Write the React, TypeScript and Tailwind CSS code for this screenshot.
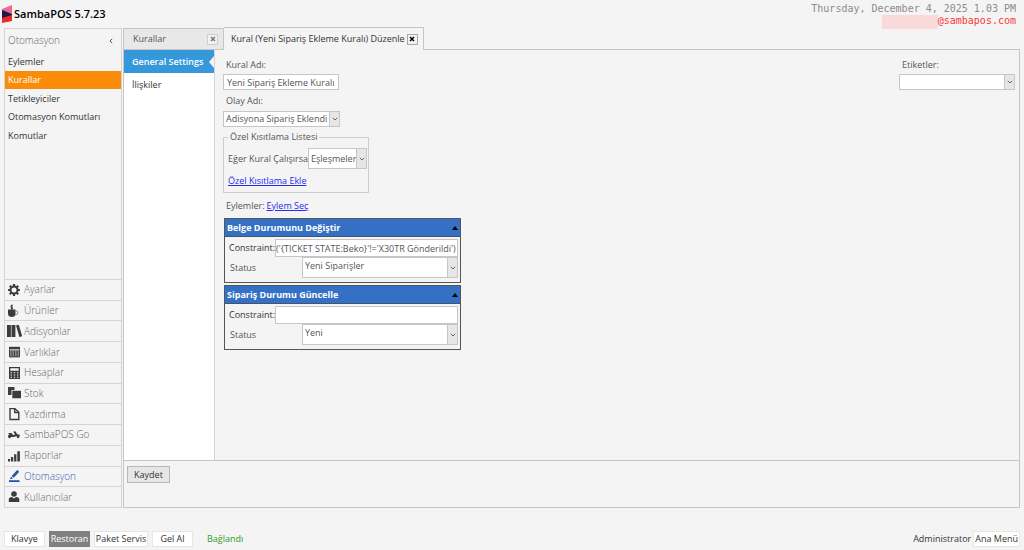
import { useState } from "react";
import type { ReactNode } from "react";

const menuItems = ["Eylemler", "Kurallar", "Tetikleyiciler", "Otomasyon Komutları", "Komutlar"];

const modules: { label: string; icon: ReactNode }[] = [
  {
    label: "Ayarlar",
    icon: (
      <>
        <circle cx="6" cy="6" r="3.5" fill="none" stroke="currentColor" strokeWidth="2" />
        <path
          d="M6 .1v2M6 9.9v2M.1 6h2M9.900 6h2M1.800 1.800l1.500 1.500M8.700 8.700l1.500 1.500M10.200 1.800L8.700 3.300M3.300 8.700l-1.500 1.500"
          stroke="currentColor"
          strokeWidth="2.200"
        />
      </>
    ),
  },
  {
    label: "Ürünler",
    icon: (
      <>
        <path d="M0 4.500h7.500v4Q7.500 12 3.800 12T0 8.500z" fill="currentColor" />
        <path d="M7.500 6h.6a1.500 1.500 0 010 3.600H7" fill="none" stroke="#888" strokeWidth="1" />
        <path d="M4.500 0Q2.500 1.500 3.800 2.500T3 4.600" fill="none" stroke="currentColor" strokeWidth="1.600" />
      </>
    ),
  },
  {
    label: "Adisyonlar",
    icon: <path d="M-1 0h3.900v12H-1zM3.500 0h3.900v12H3.500zM8 .6l2.800-.8L14.200 11.200l-2.800.8z" fill="currentColor" />,
  },
  {
    label: "Varlıklar",
    icon: (
      <>
        <path d="M1 .8h11v2.200H1z" fill="currentColor" />
        <path d="M1 3.400h11v7.800H1z" fill="#8a8a8a" />
        <path d="M1.500 3.500v7.300h10V3.500M4 5v5M6.500 5v5M9 5v5" fill="none" stroke="currentColor" strokeWidth="1" />
      </>
    ),
  },
  {
    label: "Hesaplar",
    icon: (
      <path
        fillRule="evenodd"
        fill="currentColor"
        d="M1 0h11v12H1zM2.300 1.300v2.400h8.400V1.300zM2.600 5.200v1h1.400v-1zM5.800 5.200v1h1.400v-1zM9 5.200v1h1.400v-1zM2.600 7.500v1h1.400v-1zM5.800 7.500v1h1.400v-1zM9 7.500v1h1.400v-1zM2.600 9.800v1h1.400v-1zM5.800 9.800v1h1.400v-1zM9 9.800v1h1.400v-1z"
      />
    ),
  },
  { label: "Stok", icon: <path d="M0 0h6.500v3H3.500v5H0zM4.300 3.800H13v7.400H4.300z" fill="currentColor" /> },
  {
    label: "Yazdırma",
    icon: <path d="M2 .6h5L10.800 4.200v7.300H2zM6.700 1v3.500H10.500" fill="none" stroke="currentColor" strokeWidth="1.400" />,
  },
  {
    label: "SambaPOS Go",
    icon: (
      <>
        <path d="M0 4h3.600l1.600 2.200L7 5.200 5.400 3 6 2.200 7.600 2.400 9.200 5.200l2.600.6v1.400L8.500 7 6 8H0V6.500l1.500-1z" fill="currentColor" />
        <circle cx="1.600" cy="8" r="1.300" fill="currentColor" />
        <circle cx="10" cy="7.800" r="1.400" fill="currentColor" />
      </>
    ),
  },
  {
    label: "Raporlar",
    icon: <path d="M0 9h2v2.500H0zM2.900 7h2.300v4.500H2.900zM6.100 4.200h2.300v7.300H6.100zM9.300 1.200h2.600v10.300H9.300z" fill="currentColor" />,
  },
  {
    label: "Otomasyon",
    icon: <path d="M1 10.200h10.500V12H1zM9.200 0l2 1.700-5.500 6L3.700 6zM3 6.700l2 1.700L1.800 9.200z" fill="currentColor" />,
  },
  {
    label: "Kullanıcılar",
    icon: (
      <>
        <circle cx="6" cy="3" r="2.800" fill="currentColor" />
        <path d="M.8 11V8.500Q.8 6 4 6l2 1.600L8 6q3.300 0 3.300 2.500V11z" fill="currentColor" />
      </>
    ),
  },
];

function Dropdown({ id, options, className }: { id: string; options: string[]; className: string }) {
  return (
    <div className={`relative border border-[#c6c6c6] bg-white ${className}`}>
      <select id={id} className="block h-full w-full appearance-none pr-[10px] pl-[2px] outline-none">
        {options.map((option) => (
          <option key={option}>{option}</option>
        ))}
      </select>
      <span className="pointer-events-none absolute inset-y-0 right-0 flex w-[10px] items-center justify-center border-l border-[#c6c6c6] bg-[#e6e6e6]">
        <svg viewBox="0 0 6 4" className="h-1 w-[6px]" fill="none" stroke="#666">
          <path d="M.8.8L3 3 5.200.8" />
        </svg>
      </span>
    </div>
  );
}

function CloseButton({ label, active = false }: { label: string; active?: boolean }) {
  return (
    <button
      aria-label={label}
      className={`flex h-[11px] w-[11px] items-center justify-center border bg-[#f2f2f2] ${
        active ? "border-[#a8a8a8] text-black" : "border-[#cfcfcf] text-[#777]"
      }`}
    >
      <svg viewBox="0 0 6 6" className="h-[6px] w-[6px]" stroke="currentColor" strokeWidth="1.500">
        <path d="M1 1l4 4M5 1L1 5" />
      </svg>
    </button>
  );
}

function ActionPanel({ id, title, constraint, status }: { id: string; title: string; constraint: string; status: string }) {
  const [open, setOpen] = useState(true);

  return (
    <section className="w-[237px] border border-[#555]">
      <button
        type="button"
        aria-expanded={open}
        onClick={() => setOpen(!open)}
        className="flex h-[18px] w-full items-center justify-between border-b border-[#44546c] bg-[#3470c4] px-[2px] font-bold text-white"
      >
        {title}
        <svg viewBox="0 0 6 4" className="h-1 w-[6px]">
          <path d="M0 4l3-4 3 4z" />
        </svg>
      </button>
      {open && (
        <div className="px-[2px] pt-[2px] pb-1">
          <div className="flex items-center">
            <label htmlFor={`${id}-constraint`} className="w-12 pl-[2px] text-[#333]">
              Constraint:
            </label>
            <input
              id={`${id}-constraint`}
              defaultValue={constraint}
              className="h-[18px] min-w-0 flex-1 border border-[#c6c6c6] bg-white outline-none"
            />
          </div>
          <div className="flex items-center">
            <label htmlFor={`${id}-status`} className="w-[75px] pl-[3px]">
              Status
            </label>
            <Dropdown id={`${id}-status`} options={[status]} className="h-[21px] flex-1 pb-[3px]" />
          </div>
        </div>
      )}
    </section>
  );
}

function Sidebar() {
  return (
    <aside className="flex w-[118px] flex-col border border-[#d4d4d4]">
      <div className="flex h-[23px] items-center justify-between px-[3px] text-[10px] font-light text-[#666]">
        Otomasyon
        <button aria-label="Daralt" className="mr-[5px]">
          <svg viewBox="0 0 4 6" className="h-[6px] w-1" fill="none" stroke="#555">
            <path d="M3.200.8L1 3l2.200 2.200" />
          </svg>
        </button>
      </div>
      <nav className="grid h-[93px] grid-rows-5">
        {menuItems.map((item) => (
          <a
            key={item}
            href="#"
            className={`flex items-center px-[3px] ${item === "Kurallar" ? "bg-[#fa8c0a] text-white" : "text-[#333]"}`}
          >
            {item}
          </a>
        ))}
      </nav>
      <nav className="mt-auto grid h-[228px] grid-rows-11 text-[10px] font-light">
        {modules.map(({ label, icon }) => (
          <a
            key={label}
            href="#"
            className={`flex items-center gap-1 border-t border-[#d4d4d4] pl-[3px] ${
              label === "Otomasyon" ? "text-[#3f62a8]" : "text-[#666]"
            }`}
          >
            <svg
              viewBox="0 0 12 12"
              className={`h-3 w-3 overflow-visible ${label === "Otomasyon" ? "text-[#1f51a8]" : "text-[#3c3c3c]"}`}
            >
              {icon}
            </svg>
            {label}
          </a>
        ))}
      </nav>
    </aside>
  );
}

function RuleForm() {
  return (
    <form className="flex flex-1 items-start justify-between pt-2 pr-1 pl-2 text-[#555]">
      <div className="flex flex-col items-start">
        <label htmlFor="rule-name" className="h-4 pl-[3px] leading-[14px]">
          Kural Adı:
        </label>
        <input
          id="rule-name"
          defaultValue="Yeni Sipariş Ekleme Kuralı"
          className="h-4 w-[116px] border border-[#c6c6c6] bg-white px-[3px] outline-none"
        />
        <label htmlFor="event-name" className="mt-1 h-[17px] pl-[3px] leading-[14px]">
          Olay Adı:
        </label>
        <Dropdown id="event-name" options={["Adisyona Sipariş Eklendi"]} className="h-4 w-[117px]" />
        <fieldset className="mt-1 w-[146px] border border-[#cdcdcd] pr-[1px] pb-1 pl-1">
          <legend className="px-[2px] leading-3">Özel Kısıtlama Listesi</legend>
          <div className="mt-[5px] flex items-center justify-between">
            <label htmlFor="match-mode">Eğer Kural Çalışırsa</label>
            <Dropdown id="match-mode" options={["Eşleşmeler"]} className="h-[21px] w-[59px]" />
          </div>
          <a href="#" className="mt-[5px] block leading-[14px] text-[#2a2af0] underline">
            Özel Kısıtlama Ekle
          </a>
        </fieldset>
        <div className="mt-[6px] flex h-[19px] gap-[2px] pl-[3px] leading-[14px]">
          <span>Eylemler:</span>
          <a href="#" className="text-[#2a2af0] underline">
            Eylem Seç
          </a>
        </div>
        <div className="flex flex-col gap-[2px] pl-[1px]">
          <ActionPanel
            id="ticket"
            title="Belge Durumunu Değiştir"
            constraint="('{TICKET STATE:Beko}'!='X30TR Gönderildi')"
            status="Yeni Siparişler"
          />
          <ActionPanel id="order" title="Sipariş Durumu Güncelle" constraint="" status="Yeni" />
        </div>
      </div>
      <div>
        <label htmlFor="tags" className="block h-4 pl-[3px] leading-[14px]">
          Etiketler:
        </label>
        <Dropdown id="tags" options={[""]} className="h-4 w-[116px]" />
      </div>
    </form>
  );
}

export default function App() {
  return (
    <div className="flex min-h-screen flex-col bg-[#f4f4f4] font-['Open_Sans','Noto_Sans',sans-serif] text-[9px] whitespace-nowrap text-[#333]">
      <header className="flex h-7 justify-between pr-2 pl-[2px]">
        <div className="flex items-center gap-[2px] text-[11px] font-semibold text-black">
          <svg viewBox="0 0 10 18" className="h-[18px] w-[10px]">
            <path d="M0 4L10 0v10L0 7z" fill="#ee6a94" />
            <path d="M0 5l10 4v3L0 14z" fill="#1e1b4b" />
            <path d="M0 13l10-3v6L0 18z" fill="#ee2a2f" />
          </svg>
          SambaPOS 5.7.23
        </div>
        <div className="flex flex-col items-end pt-[3px] font-['DejaVu_Sans_Mono','Liberation_Mono',monospace] text-[10px] leading-3 text-[#8c8c8c]">
          <time>Thursday, December 4, 2025 1.03 PM</time>
          <div className="flex text-[#f83838]">
            <span className="h-[14px] w-[56px] bg-[#f8dada]"></span>
            @sambapos.com
          </div>
        </div>
      </header>

      <div className="flex flex-1 gap-[1px] pr-1 pl-1">
        <Sidebar />
        <main className="flex flex-1 flex-col">
          {/* Document tabs */}
          <div className="flex h-[22px] items-end border-b border-[#c6c6c6]">
            <div className="flex h-[21px] w-[101px] items-center justify-between border border-b-0 border-[#c6c6c6] bg-[#e8e8e8] pr-[5px] pl-[9px] text-[#555]">
              <button>Kurallar</button>
              <CloseButton label="Kurallar sekmesini kapat" />
            </div>
            <div className="-mb-[1px] flex h-[23px] items-center gap-[2px] border border-b-0 border-l-0 border-[#c6c6c6] bg-[#f4f4f4] pr-[5px] pl-[7px]">
              <button>Kural (Yeni Sipariş Ekleme Kuralı) Düzenle</button>
              <CloseButton label="Düzenle sekmesini kapat" active />
            </div>
          </div>

          <div className="flex flex-1 flex-col border border-t-0 border-[#c6c6c6]">
            <div className="flex flex-1 border-b border-[#c6c6c6]">
              <nav className="w-[91px] border-r border-[#d4d4d4] bg-white">
                <a href="#" className="flex h-[23px] items-center justify-between bg-[#3498db] pl-2 font-semibold text-white">
                  General Settings
                  <svg viewBox="0 0 5 12" className="h-3 w-[5px]" fill="#f4f4f4">
                    <path d="M5 0v12L0 6z" />
                  </svg>
                </a>
                <a href="#" className="flex h-6 items-center pl-2">
                  İlişkiler
                </a>
              </nav>
              <RuleForm />
            </div>
            <div className="h-[46px] px-[3px] pt-[5px]">
              <button className="h-[17px] w-[43px] border border-[#b8b8b8] bg-[#e6e6e6]">Kaydet</button>
            </div>
          </div>
        </main>
      </div>

      <footer className="mt-[23px] mb-[3px] flex h-4 items-stretch justify-between pr-1 pl-1">
        <div className="flex items-stretch gap-1">
          <button className="w-[41px] border border-[#e6e6e6] bg-white">Klavye</button>
          <button className="w-[41px] bg-[#808080] text-white">Restoran</button>
          <button className="w-[54px] border border-[#e6e6e6] bg-white">Paket Servis</button>
          <button className="w-[41px] border border-[#e6e6e6] bg-white">Gel Al</button>
          <span className="flex items-center pl-[10px] text-[#2e9a2e]">Bağlandı</span>
        </div>
        <div className="flex items-stretch gap-[2px]">
          <span className="flex items-center">Administrator</span>
          <button className="border border-[#e6e6e6] bg-white px-[1px]">Ana Menü</button>
        </div>
      </footer>
    </div>
  );
}
